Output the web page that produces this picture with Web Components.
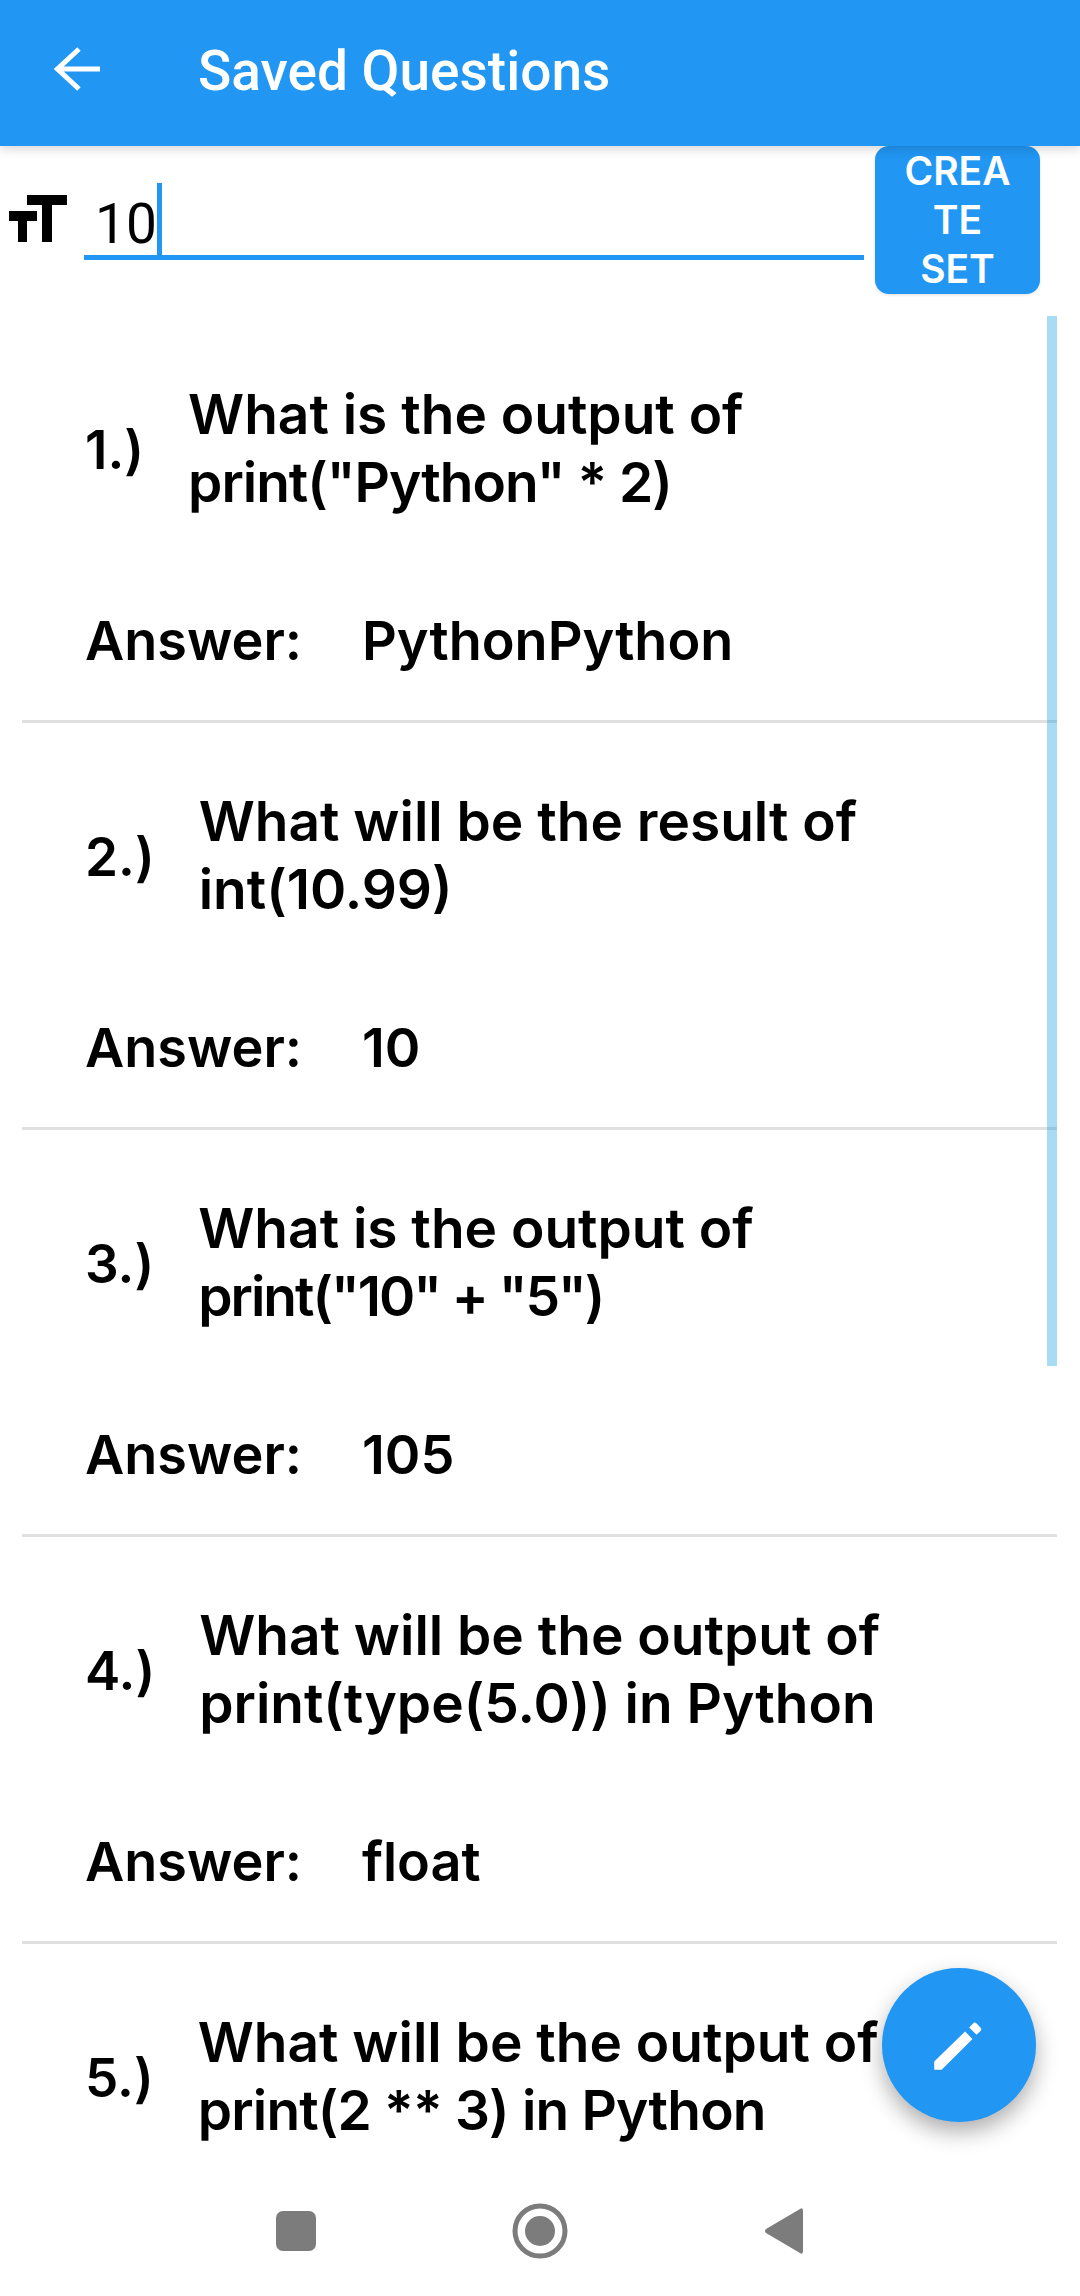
<!DOCTYPE html>
<html>
<head>
<meta charset="utf-8">
<title>Saved Questions</title>
<style>
  html, body { margin: 0; height: 100%; background: #fff; }
  body { width: 1080px; height: 2296px; overflow: hidden; font-family: Inter, sans-serif; }
</style>
</head>
<body>
<saved-page>
  <app-bar slot="bar" title="Saved Questions"></app-bar>
  <set-row slot="row" value="10"></set-row>
  <question-list slot="list">
    <question-item num="1.)" q1="What is the output of" q2='print("Python" * 2)' tight="1" answer="PythonPython"></question-item>
    <question-item num="2.)" q1="What will be the result of" q2="int(10.99)" answer="10"></question-item>
    <question-item num="3.)" q1="What is the output of" q2='print("10" + "5")' tight="2" answer="105"></question-item>
    <question-item num="4.)" q1="What will be the output of" q2="print(type(5.0)) in Python" answer="float"></question-item>
    <question-item num="5.)" q1="What will be the output of" q2="print(2 ** 3) in Python" tight="0.8"></question-item>
  </question-list>
  <edit-fab slot="fab"></edit-fab>
  <nav-bar slot="nav"></nav-bar>
</saved-page>
<script>
class SavedPage extends HTMLElement {
  connectedCallback() {
    this.attachShadow({ mode: 'open' }).innerHTML = `
    <style>
      :host { display: flex; flex-direction: column; position: relative; width: 1080px; height: 2296px; overflow: hidden; background: #fff; }
      .body { flex: 1; min-height: 0; overflow: hidden; }
      ::slotted([slot=bar]) { flex: none; }
      ::slotted([slot=nav]) { flex: none; }
    </style>
    <slot name="bar"></slot>
    <slot name="row"></slot>
    <div class="body"><slot name="list"></slot></div>
    <slot name="nav"></slot>
    <slot name="fab"></slot>`;
  }
}
class AppBar extends HTMLElement {
  connectedCallback() {
    this.attachShadow({ mode: 'open' }).innerHTML = `
    <style>
      :host { display: flex; align-items: center; height: 146px; box-sizing: border-box; padding: 0 0 4px 54px; background: #2196f3; color: #fff; position: relative; z-index: 2; box-shadow: 0 3px 10px rgba(0,0,0,.16); }
      svg { width: 46px; height: 46px; flex: none; margin-top: -4px; }
      h1 { margin: 0 0 0 98px; font: 500 55px Roboto, sans-serif; }
    </style>
    <svg viewBox="0 0 46 46"><path d="M46 23H5M25 3L3.500 23 25 43" fill="none" stroke="#fff" stroke-width="5"/></svg>
    <h1>${this.getAttribute('title')}</h1>`;
  }
}
class SetRow extends HTMLElement {
  connectedCallback() {
    this.attachShadow({ mode: 'open' }).innerHTML = `
    <style>
      :host { display: flex; height: 170px; align-items: flex-start; box-sizing: border-box; padding-left: 9px; }
      .size { width: 58px; height: 47px; margin: 49px 17px 0 0; flex: none; }
      .field { width: 780px; height: 114px; box-sizing: border-box; border-bottom: 5px solid #2196f3; display: flex; align-items: flex-end; padding-left: 11px; flex: none; }
      .val { font: 400 55px/62px Roboto, sans-serif; color: #000; }
      .caret { width: 5px; height: 72px; background: #2196f3; }
      button { flex: none; width: 165px; height: 148px; margin-left: 11px; border: 0; border-radius: 14px; padding: 0 0 2px; background: #2196f3; color: #fff; font: 600 39px/49px Inter, sans-serif; box-shadow: 0 1px 3px rgba(0,0,0,.12); }
      button span { display: block; }
    </style>
    <svg class="size" viewBox="0 0 58 47"><path d="M0 16H28V26H18V47H9V26H0ZM18 0H58V10H43V47H33V10H18Z" fill="#000"/></svg>
    <div class="field"><span class="val">${this.getAttribute('value')}</span><span class="caret"></span></div>
    <button><span>CREA</span><span>TE</span><span>SET</span></button>`;
  }
}
class QuestionList extends HTMLElement {
  connectedCallback() {
    this.attachShadow({ mode: 'open' }).innerHTML = `
    <style>
      :host { display: block; position: relative; padding: 0 23px 0 22px; }
      .bar { position: absolute; top: 0; right: 23px; width: 10px; height: 1050px; background: rgba(6,155,226,.35); z-index: 1; }
    </style>
    <slot></slot><div class="bar"></div>`;
  }
}
class QuestionItem extends HTMLElement {
  connectedCallback() {
    const a = n => this.getAttribute(n);
    const ans = this.hasAttribute('answer')
      ? `<div class="ans"><span class="label">Answer:</span><span>${a('answer')}</span></div>` : '';
    const tight = a('tight') || 0;
    this.attachShadow({ mode: 'open' }).innerHTML = `
    <style>
      :host { display: block; height: 407px; box-sizing: border-box; border-bottom: 3px solid #e0e0e0; padding-left: 63px; color: #000; font: 600 55px/68px Inter, sans-serif; white-space: nowrap; }
      .q { display: flex; align-items: center; gap: 44px; height: 264px; }
      .num { flex: none; margin-top: 4px; font-size: 53px; }
      .code { display: block; letter-spacing: calc(var(--tight) * -1px); }
      .ans { display: flex; height: 68px; padding-top: 27px; font-size: 54px; }
      .label { width: 277px; flex: none; }
    </style>
    <div class="q"><div class="num">${a('num')}</div><div class="text">${a('q1')}<span class="code" style="--tight:${tight}">${a('q2')}</span></div></div>
    ${ans}`;
  }
}
class EditFab extends HTMLElement {
  connectedCallback() {
    this.attachShadow({ mode: 'open' }).innerHTML = `
    <style>
      :host { position: absolute; left: 882px; top: 1968px; width: 154px; height: 154px; border-radius: 50%; background: #2196f3; box-shadow: 0 10px 22px rgba(0,0,0,.32); display: flex; align-items: center; justify-content: center; z-index: 3; }
      svg { width: 66px; height: 66px; }
    </style>
    <svg viewBox="0 0 24 24"><path d="M3 18V21H5.700L16.900 9.800 14.200 7.100ZM19.800 6.900a.9.900 0 0 0 0-1.300L18.400 4.200a.9.900 0 0 0-1.300 0L15.700 5.600 18.400 8.300Z" fill="#fff"/></svg>`;
  }
}
class NavBar extends HTMLElement {
  connectedCallback() {
    this.attachShadow({ mode: 'open' }).innerHTML = `
    <style>
      :host { display: grid; grid-template-columns: repeat(3, 244px); justify-content: center; justify-items: center; align-items: center; height: 130px; background: #fff; position: relative; z-index: 1; }
      svg { display: block; }
    </style>
    <svg width="60" height="60" viewBox="0 0 60 60"><rect x="10" y="10" width="40" height="40" rx="7" fill="#7c7c7c"/></svg>
    <svg width="60" height="60" viewBox="0 0 60 60"><circle cx="30" cy="30" r="25" fill="none" stroke="#7c7c7c" stroke-width="5"/><circle cx="30" cy="30" r="15" fill="#7c7c7c"/></svg>
    <svg width="60" height="60" viewBox="0 0 60 60"><path d="M49 10V50Q49 54 46 52L12 32Q10 30 12 28L46 8Q49 6 49 10Z" fill="#7c7c7c"/></svg>`;
  }
}
customElements.define('saved-page', SavedPage);
customElements.define('app-bar', AppBar);
customElements.define('set-row', SetRow);
customElements.define('question-list', QuestionList);
customElements.define('question-item', QuestionItem);
customElements.define('edit-fab', EditFab);
customElements.define('nav-bar', NavBar);
</script>
</body>
</html>
